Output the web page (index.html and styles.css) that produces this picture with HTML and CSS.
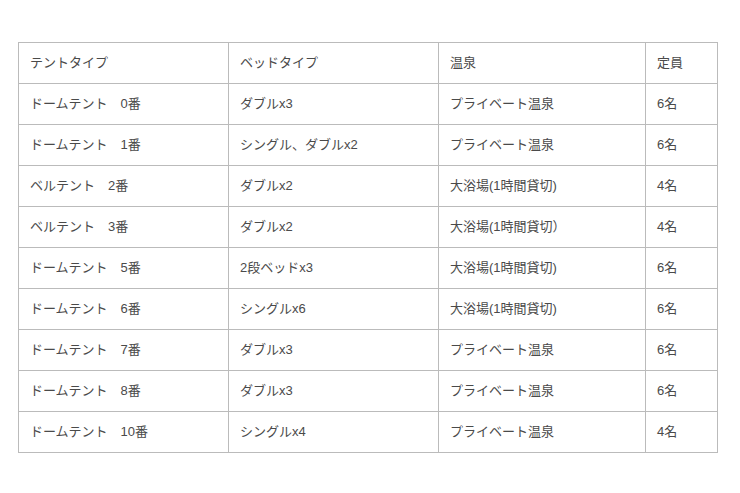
FILE: index.html
```html
<!DOCTYPE html>
<html lang="ja">
<head>
<meta charset="utf-8">
<link rel="stylesheet" href="styles.css">
</head>
<body>
<div class="wrap">
<table class="tents">
<colgroup>
<col class="c1"><col class="c2"><col class="c3"><col class="c4">
</colgroup>
<tbody>
<tr><td>テントタイプ</td><td>ベッドタイプ</td><td>温泉</td><td>定員</td></tr>
<tr><td>ドームテント　0番</td><td>ダブルx3</td><td>プライベート温泉</td><td>6名</td></tr>
<tr><td>ドームテント　1番</td><td>シングル、ダブルx2</td><td>プライベート温泉</td><td>6名</td></tr>
<tr><td>ベルテント　2番</td><td>ダブルx2</td><td>大浴場(1時間貸切)</td><td>4名</td></tr>
<tr><td>ベルテント　3番</td><td>ダブルx2</td><td>大浴場(1時間貸切）</td><td>4名</td></tr>
<tr><td>ドームテント　5番</td><td>2段ベッドx3</td><td>大浴場(1時間貸切)</td><td>6名</td></tr>
<tr><td>ドームテント　6番</td><td>シングルx6</td><td>大浴場(1時間貸切)</td><td>6名</td></tr>
<tr><td>ドームテント　7番</td><td>ダブルx3</td><td>プライベート温泉</td><td>6名</td></tr>
<tr><td>ドームテント　8番</td><td>ダブルx3</td><td>プライベート温泉</td><td>6名</td></tr>
<tr><td>ドームテント　10番</td><td>シングルx4</td><td>プライベート温泉</td><td>4名</td></tr>
</tbody>
</table>
</div>
</body>
</html>
```
FILE: styles.css
```css
html, body {
  margin: 0;
  padding: 0;
  background: #fff;
}
.wrap {
  padding: 42px 0 0 18px;
}
.tents {
  border-collapse: collapse;
  table-layout: fixed;
  width: 699px;
  font-family: "Liberation Sans", "Noto Sans CJK JP", sans-serif;
  font-size: 13px;
  color: #4a4a4a;
}
.c1 { width: 210px; }
.c2 { width: 210px; }
.c3 { width: 207px; }
.c4 { width: 72px; }
.tents td {
  border: 1px solid #bbb;
  height: 40px;
  padding: 0 0 0 11px;
  line-height: 16px;
  vertical-align: middle;
  box-sizing: border-box;
  white-space: nowrap;
}
.tents tr {
  height: 41px;
}
```
